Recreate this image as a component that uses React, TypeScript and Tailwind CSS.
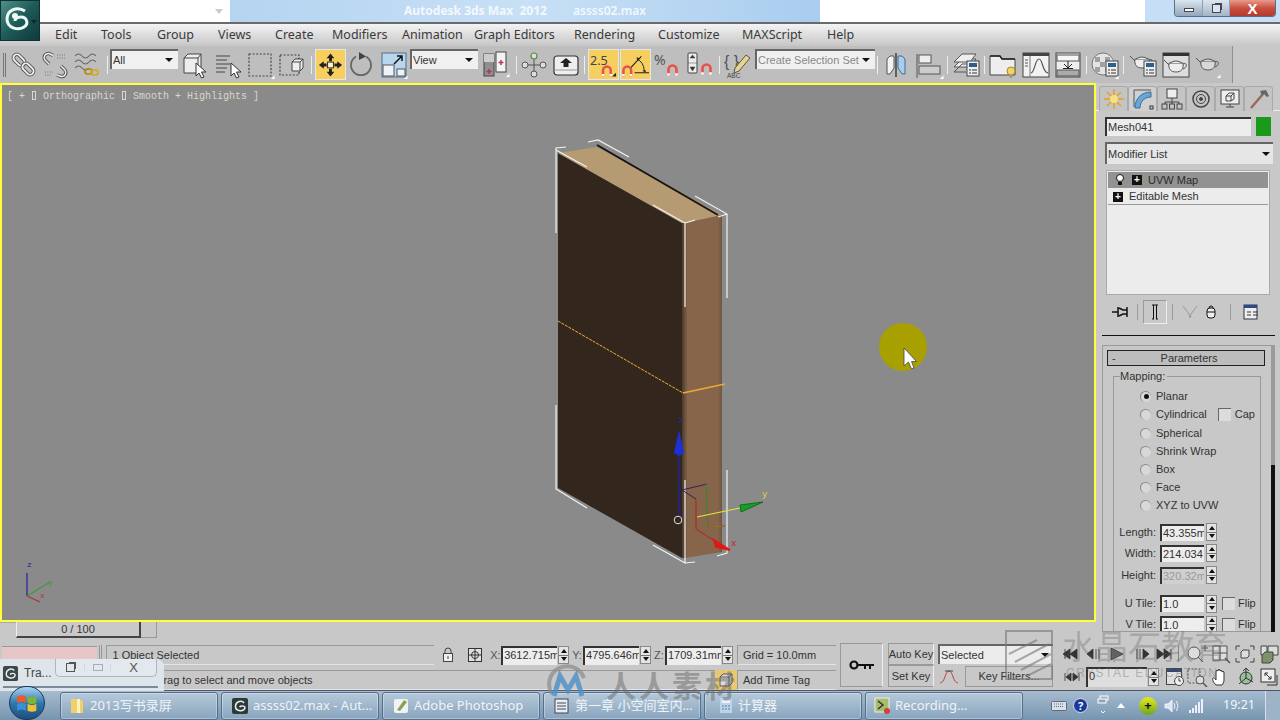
import React from "react";

const UI = "font-['Liberation_Sans',sans-serif]";
const MENU = "font-['Noto_Sans','Liberation_Sans',sans-serif]";
const CJK = "font-['Noto_Sans','Noto_Sans_CJK_SC',sans-serif]";

type IcoProps = { children: React.ReactNode; size?: number };

const Ico = ({ children, size = 30 }: IcoProps) => (
  <svg width={size} height={size} viewBox="0 0 30 30" fill="none">
    {children}
  </svg>
);

const Cursor = ({ x, y, s = 1 }: { x: number; y: number; s?: number }) => (
  <path
    transform={`translate(${x} ${y}) scale(${s})`}
    d="M0 0V13L3 10L5.5 15L8 14L5.5 9H10Z"
    fill="#fff"
    stroke="#333"
    strokeWidth="1"
  />
);

// horseshoe magnet used by the snap toggles
const Magnet = ({ x, y }: { x: number; y: number }) => (
  <g transform={`translate(${x} ${y})`}>
    <path d="M1.500 12V5.500a4 4 0 0 1 8 0V12" stroke="#e8524a" strokeWidth="2.600" />
    <path d="M.2 10.500h2.600M8.200 10.500h2.600" stroke="#fff" strokeWidth="2.400" />
  </g>
);

const Flyout = ({ x = 25, y = 25 }: { x?: number; y?: number }) => (
  <path d={`M${x} ${y}h3.500v-3.500Z`} fill="#fff" />
);

const Ring = ({ x, y, r }: { x: number; y: number; r: number }) => (
  <g transform={`rotate(-45 ${x} ${y})`}>
    <rect x={x - 3.500} y={y - 6.500} width="7" height="13" rx="3.500" stroke="#555" strokeWidth="3.600" />
    <rect x={x - 3.500} y={y - 6.500} width="7" height="13" rx="3.500" stroke="#eee" strokeWidth={r} />
  </g>
);

const Link = () => (
  <Ico>
    <Ring x={10} y={10} r={1.800} />
    <Ring x={19} y={19} r={1.800} />
  </Ico>
);

const Unlink = () => (
  <Ico>
    <path d="M13 5.500 9 3.500C5 3 3 7 5 10l4 4" stroke="#555" strokeWidth="3.400" />
    <path d="M13 5.500 9 3.500C5 3 3 7 5 10l4 4" stroke="#eee" strokeWidth="1.400" />
    <path d="M17 25l4 1.500c4 .5 6-3.500 4-6.500l-4-4" stroke="#555" strokeWidth="3.400" />
    <path d="M17 25l4 1.500c4 .5 6-3.500 4-6.500l-4-4" stroke="#eee" strokeWidth="1.400" />
    <path d="M17 5h8M17 8h8M5 22h8M5 25h6" stroke="#777" strokeWidth="1.200" strokeDasharray="1 1.400" />
  </Ico>
);

const Bind = () => (
  <Ico>
    <path d="M2 6q3.500-4 7 0t7 0 7 0M2 12q3.500-4 7 0t7 0 7 0M2 18q3.500-4 7 0t7 0" stroke="#666" strokeWidth="1.100" />
    <rect x="12" y="19" width="7" height="5" rx="2.500" stroke="#b8860b" strokeWidth="1.600" />
    <rect x="18" y="20" width="7" height="5" rx="2.500" stroke="#d9a520" strokeWidth="1.600" />
  </Ico>
);

const SelectObj = () => (
  <Ico>
    <path d="M4 8 8 4h13v15l-3 4H4Z" fill="#eee" stroke="#444" />
    <path d="M4 8h14v15M18 8l3-4" stroke="#444" />
    <Cursor x={16} y={13} />
  </Ico>
);

const SelectName = () => (
  <Ico>
    <path d="M3 6h14M3 10h11M3 14h14M3 18h11M3 22h9" stroke="#444" />
    <Cursor x={18} y={13} />
  </Ico>
);

const RectSel = () => (
  <Ico>
    <rect x="4" y="4" width="22" height="22" stroke="#444" strokeWidth="1.200" strokeDasharray="2 1.600" />
    <Flyout x={26} y={29} />
  </Ico>
);

const WindowSel = () => (
  <Ico>
    <rect x="3" y="5" width="19" height="20" stroke="#444" strokeWidth="1.200" strokeDasharray="2 1.600" />
    <path d="M15 12l3-3h8v9l-3 3h-8Z" fill="#eee" stroke="#444" />
    <path d="M15 12h8v9M23 12l3-3" stroke="#444" />
  </Ico>
);

const Move = () => (
  <Ico>
    <rect x="12" y="12" width="6" height="6" fill="#fff6d0" stroke="#222" />
    <path d="M15 3l4 5h-2.500v3h-3V8H11ZM15 27l4-5h-2.500v-3h-3v3H11ZM3 15l5-4v2.500h3v3H8V19ZM27 15l-5-4v2.500h-3v3h3V19Z" fill="#222" />
  </Ico>
);

const Rotate = () => (
  <Ico>
    <path d="M19 6.500A10 10 0 1 1 9 6.500" stroke="#666" strokeWidth="1.800" />
    <path d="M12 2l7 4.500-7 3.500Z" fill="#444" />
  </Ico>
);

const Scale = () => (
  <Ico>
    <rect x="3" y="3" width="24" height="24" fill="#b9d6ee" stroke="#4a6f8f" />
    <rect x="4" y="15" width="11" height="11" fill="#eef3f7" stroke="#555" />
    <rect x="18" y="19" width="8" height="7" fill="#eef3f7" stroke="#555" />
    <path d="M15 14 23 6M18 6h5v5" stroke="#111" strokeWidth="1.500" />
    <Flyout x={25} y={29} />
  </Ico>
);

const Pivot = () => (
  <Ico>
    <rect x="3" y="4" width="10" height="22" fill="#8f8f8f" stroke="#444" />
    <rect x="3" y="4" width="10" height="8" fill="#ccc" />
    <rect x="15" y="2" width="10" height="20" fill="#f2f2f2" stroke="#444" />
    <path d="M8 19v5M5.500 21.500h5M20 10v5M17.500 12.500h5" stroke="#c03050" strokeWidth="1.500" />
    <Flyout x={25} y={27} />
  </Ico>
);

const Manip = () => (
  <Ico>
    <path d="M15 5v20M5 15h20" stroke="#555" />
    <circle cx="15" cy="6" r="3" fill="#ddd" stroke="#5a8a3a" strokeWidth="1.200" />
    <circle cx="6" cy="15" r="3" fill="#ddd" stroke="#555" />
    <circle cx="24" cy="15" r="3" fill="#ddd" stroke="#555" />
    <circle cx="15" cy="24" r="3" fill="#ddd" stroke="#555" />
  </Ico>
);

const Keyb = () => (
  <Ico>
    <rect x="3" y="6" width="24" height="19" rx="3" fill="#eee" stroke="#333" strokeWidth="1.200" />
    <path d="M3 20h24" stroke="#999" />
    <path d="M15 8l6 5h-3.500v4h-5v-4H9Z" fill="#222" />
  </Ico>
);

const Snap = () => (
  <Ico>
    <text x="1" y="15" fontSize="13" fill="#444" fontFamily="Noto Sans, sans-serif">2.5</text>
    <Magnet x={13} y={15} />
    <path d="M24 27h4v-4Z" fill="#222" />
  </Ico>
);

const AngleSnap = () => (
  <Ico>
    <path d="M9 19 21 6M14 23h15" stroke="#222" strokeWidth="1.200" />
    <path d="M17 9q6 3 7 11" stroke="#222" />
    <path d="M16 7l3 1-2 2.500ZM22 21l3-1 1 3Z" fill="#222" />
    <Magnet x={1} y={15} />
  </Ico>
);

const PercentSnap = () => (
  <Ico>
    <text x="1" y="15" fontSize="14" fill="#555" fontFamily="Noto Sans, sans-serif">%</text>
    <Magnet x={14} y={14} />
  </Ico>
);

const SpinnerSnap = () => (
  <Ico>
    <rect x="3" y="3" width="9" height="20" rx="1" fill="#eee" stroke="#444" />
    <path d="M3 13h9M7.500 5l2.500 3H5ZM7.500 21 5 17h5Z" fill="#333" stroke="#444" strokeWidth=".5" />
    <Magnet x={16} y={13} />
  </Ico>
);

const Abc = () => (
  <Ico>
    <text x="0" y="17" fontSize="16" fill="#555" fontFamily="Liberation Sans, sans-serif">{"{ }"}</text>
    <path d="M11 18 22 5l4 3-11 13-5 2Z" fill="#e8d48a" stroke="#555" />
    <text x="3" y="28" fontSize="6.500" fill="#444" fontFamily="Liberation Sans, sans-serif">ABC</text>
  </Ico>
);

const Mirror = () => (
  <Ico>
    <path d="M15 3v24" stroke="#222" strokeWidth="1.200" />
    <path d="M13 6H9L6 9v15h3l4-6Z" fill="#f2f2f2" stroke="#555" />
    <path d="M17 6h4l3 3v15h-3l-4-6Z" fill="#a9cdea" stroke="#3a6f99" />
  </Ico>
);

const Align = () => (
  <Ico>
    <path d="M3 4v24" stroke="#555" />
    <rect x="5" y="5" width="12" height="8" fill="#eee" stroke="#555" />
    <rect x="5" y="16" width="21" height="8" fill="#ccc" stroke="#555" />
    <Flyout x={26} y={29} />
  </Ico>
);

const Doc = () => (
  <>
    <rect x="16" y="11" width="12" height="15" fill="#eee" stroke="#444" />
    <rect x="18" y="13" width="8" height="4" fill="#2d5f8a" />
    <path d="M18 20h2M21 20h5M18 23h2M21 23h5" stroke="#333" />
  </>
);

const Layers = () => (
  <Ico>
    <path d="M3 17 11 9h14l-6 8Z" fill="#eee" stroke="#555" />
    <path d="M3 12 11 4h14l-6 8Z" fill="#eee" stroke="#555" />
    <path d="M3 22l8-8h6" stroke="#555" />
    <path d="M3 22h12" stroke="#555" />
    <Doc />
  </Ico>
);

const Curve = () => (
  <Ico>
    <rect x="2" y="3" width="26" height="24" fill="#f2f2f2" stroke="#444" />
    <rect x="2" y="3" width="26" height="3" fill="#444" />
    <path d="M9 6v21" stroke="#777" />
    <path d="M10 23c4-1 4-14 8-14s3 13 9 14" stroke="#555" strokeWidth="1.200" />
    <path d="M4 10h3M4 13h3M4 16h3" stroke="#555" />
  </Ico>
);

const Folder = () => (
  <Ico>
    <path d="M2 6h10l2 3h13v16H2Z" fill="#eee" stroke="#444" />
    <path d="M2 6h10l2 3h13" stroke="#222" strokeWidth="1.500" />
    <circle cx="23" cy="21" r="4" fill="#f3d36a" stroke="#b08a1e" />
    <rect x="21.500" y="25" width="3" height="3" fill="#999" />
  </Ico>
);

const Schematic = () => (
  <Ico>
    <rect x="3" y="3" width="24" height="24" fill="#eee" stroke="#444" />
    <rect x="4" y="5" width="22" height="6" fill="#f6f6f6" stroke="#555" />
    <rect x="4" y="20" width="22" height="6" fill="#aaa" stroke="#555" />
    <path d="M15 11v6M11 14l4 4 4-4M10 18.500h10" stroke="#222" />
  </Ico>
);

const Material = () => (
  <Ico>
    <circle cx="13" cy="14" r="11" fill="#e4e4e4" stroke="#777" />
    <path d="M5 7h5v5H5ZM15 7h5v5h-5ZM10 12h5v5h-5ZM5 17h5v5H5ZM15 17h5v5h-5Z" fill="#a0a0a0" />
    <Doc />
    <Flyout x={25} y={29} />
  </Ico>
);

const TeapotShape = ({ x = 0, y = 0, fill = "#eee" }: { x?: number; y?: number; fill?: string }) => (
  <g transform={`translate(${x} ${y})`} stroke="#555">
    <path d="M7 10c-1 6 2 9 7 9s8-3 7-9Z" fill={fill} />
    <path d="M7 12 2 7M21 11c4-2 5 3 0 5" />
    <path d="M8 10q6-4 12 0" fill={fill} />
  </g>
);

const TeapotDoc = () => (
  <Ico>
    <TeapotShape y={-1} />
    <Doc />
  </Ico>
);

const TeapotFrame = () => (
  <Ico>
    <rect x="2" y="3" width="26" height="24" fill="#ddd" stroke="#444" />
    <rect x="2" y="3" width="26" height="3" fill="#333" />
    <TeapotShape x={1} y={3} />
  </Ico>
);

const TeapotPlain = () => (
  <Ico>
    <TeapotShape x={1} y={1} fill="#d8d8d8" />
    <Flyout x={24} y={28} />
  </Ico>
);

const Cell = ({ w, on, children }: { w: string; on?: boolean; children: React.ReactNode }) => (
  <div className={`${w} h-[37px] flex items-center justify-center shrink-0`}>
    <div className={on ? "w-[31px] h-[31px] bg-[#f7cf5e] border border-[#e6e6e6] flex items-center justify-center" : "flex items-center justify-center"}>
      {children}
    </div>
  </div>
);

const Sep = ({ w }: { w: string }) => (
  <div className={`${w} h-[37px] flex items-center justify-center shrink-0`}>
    <div className="w-px h-[18px] bg-[#777] border-r border-[#eee]" />
  </div>
);

const Drop = ({ w, label, muted }: { w: string; label: string; muted?: boolean }) => (
  <div className={`${w} h-[20px] -mt-[11px] shrink-0 bg-[#f0f0f0] border-l-2 border-t-2 border-[#666] flex items-center justify-between pl-[1px] pr-[5px] text-[11px] ${muted ? "text-[#888]" : "text-[#333]"}`}>
    <span className="truncate">{label}</span>
    <span className="w-0 h-0 shrink-0 border-l-[4px] border-r-[4px] border-t-[4px] border-l-transparent border-r-transparent border-t-[#111]" />
  </div>
);

const menus: [string, string][] = [
  ["Edit", "w-[46px]"],
  ["Tools", "w-[56px]"],
  ["Group", "w-[61px]"],
  ["Views", "w-[57px]"],
  ["Create", "w-[57px]"],
  ["Modifiers", "w-[70px]"],
  ["Animation", "w-[72px]"],
  ["Graph Editors", "w-[100px]"],
  ["Rendering", "w-[84px]"],
  ["Customize", "w-[84px]"],
  ["MAXScript", "w-[85px]"],
  ["Help", "w-[40px]"],
];

const TitleBar = () => (
  <div className="h-[24px] flex border-b-2 border-[#6a6a6a] bg-white shrink-0">
    <div className="w-[230px] flex justify-end items-center pr-[7px]">
      <span className="w-0 h-0 border-l-[4px] border-r-[4px] border-t-[5px] border-l-transparent border-r-transparent border-t-[#c4ccd6]" />
    </div>
    <div className={`w-[590px] bg-gradient-to-r from-[#b4d4f0] via-[#c8e0f6] to-[#a9cdef] flex items-center pl-[174px] text-[12px] font-bold text-[#f4f8fc] ${MENU}`}>
      <span className="w-[169px]">Autodesk 3ds Max&nbsp;&nbsp;2012</span>
      <span className="font-semibold">assss02.max</span>
    </div>
    <div className="w-[325px]" />
    <div className="w-[135px] bg-[#c6dff6] flex justify-end pr-[4px]">
      <div className="h-[17px] flex rounded-b-[4px] border border-t-0 border-[#5f6f80] overflow-hidden">
        <div className="w-[28px] bg-gradient-to-b from-[#dbe6f0] to-[#93a6ba] border-r border-[#8fa0b0] flex items-center justify-center">
          <div className="w-[10px] h-[4px] border border-[#445] bg-white mt-[3px]" />
        </div>
        <div className="w-[27px] bg-gradient-to-b from-[#dbe6f0] to-[#a4b5c6] border-r border-[#8fa0b0] flex items-center justify-center">
          <div className="w-[9px] h-[9px] border border-[#445] bg-[#dde6ee] shadow-[2px_-2px_0_-1px_#445]" />
        </div>
        <div className="w-[45px] bg-gradient-to-b from-[#e89a8c] via-[#c94f3f] to-[#b23a2e] flex items-center justify-center text-[15px] leading-none font-bold text-white">
          <span className={UI}>X</span>
        </div>
      </div>
    </div>
  </div>
);

const MenuBar = () => (
  <div className={`h-[22px] flex items-center pl-[55px] text-[12.5px] text-[#3a3a3a] bg-gradient-to-b from-[#f4f4f4] to-[#c6c6c6] shrink-0 ${MENU}`}>
    {menus.map(([label, w]) => (
      <span key={label} className={`${w} shrink-0`}>{label}</span>
    ))}
  </div>
);

const Toolbar = () => (
  <div className={`h-[37px] flex bg-[#c8c8c8] shrink-0 ${UI}`}>
    <div className="w-[1233px] h-[37px] flex items-center bg-[#bebebe] border-r border-[#8f8f8f]">
      <div className="w-[8px] flex justify-center shrink-0">
        <div className="w-[3px] h-[24px] border-x border-[#777]" />
      </div>
      <Cell w="w-[31px]"><Link /></Cell>
      <Cell w="w-[32px]"><Unlink /></Cell>
      <Cell w="w-[34px]"><Bind /></Cell>
      <Sep w="w-[5px]" />
      <Drop w="w-[68px]" label="All" />
      <Cell w="w-[34px]"><SelectObj /></Cell>
      <Cell w="w-[32px]"><SelectName /></Cell>
      <Cell w="w-[32px]"><RectSel /></Cell>
      <Cell w="w-[32px]"><WindowSel /></Cell>
      <Sep w="w-[6px]" />
      <Cell w="w-[32px]" on><Move /></Cell>
      <Cell w="w-[32px]"><Rotate /></Cell>
      <Cell w="w-[32px]"><Scale /></Cell>
      <Drop w="w-[68px]" label="View" />
      <Cell w="w-[36px]"><Pivot /></Cell>
      <Sep w="w-[4px]" />
      <Cell w="w-[32px]"><Manip /></Cell>
      <Cell w="w-[32px]"><Keyb /></Cell>
      <Sep w="w-[5px]" />
      <Cell w="w-[32px]" on><Snap /></Cell>
      <Cell w="w-[33px]" on><AngleSnap /></Cell>
      <Cell w="w-[32px]"><PercentSnap /></Cell>
      <Cell w="w-[32px]"><SpinnerSnap /></Cell>
      <Sep w="w-[6px]" />
      <Cell w="w-[33px]"><Abc /></Cell>
      <Drop w="w-[120px]" label="Create Selection Set" muted />
      <Sep w="w-[5px]" />
      <Cell w="w-[32px]"><Mirror /></Cell>
      <Cell w="w-[33px]"><Align /></Cell>
      <Sep w="w-[5px]" />
      <Cell w="w-[32px]"><Layers /></Cell>
      <Sep w="w-[4px]" />
      <Cell w="w-[34px]"><Folder /></Cell>
      <Cell w="w-[32px]"><Curve /></Cell>
      <Cell w="w-[32px]"><Schematic /></Cell>
      <Sep w="w-[5px]" />
      <Cell w="w-[32px]"><Material /></Cell>
      <Sep w="w-[5px]" />
      <Cell w="w-[34px]"><TeapotDoc /></Cell>
      <Cell w="w-[32px]"><TeapotFrame /></Cell>
      <Cell w="w-[32px]"><TeapotPlain /></Cell>
    </div>
  </div>
);

const brackets = [
  "M556 233V148L566 147M556 150 587 167",
  "M588 142 598 140 629 157",
  "M695 196 727 214V298M718 217 727 214",
  "M653 205 685 223V307M685 223 695 220",
  "M556 405V489L587 508",
  "M653 545 685 563V480M685 563 695 562",
  "M727 470V553L717 556",
];

const Model = () => (
  <svg className="absolute inset-0" width="1092" height="535" viewBox="2 85 1092 535" fill="none">
    <defs>
      <linearGradient id="side" x1="0" x2="1" y1="0" y2="0">
        <stop offset="0" stopColor="#4a3a2e" />
        <stop offset=".14" stopColor="#87654a" />
        <stop offset=".9" stopColor="#87654a" />
        <stop offset="1" stopColor="#6d5644" />
      </linearGradient>
    </defs>
    <path d="M558 153 682 223V558L558 488Z" fill="#33261d" />
    <path d="M558 153 597 147 722 215 685 223 682 223Z" fill="#b69a72" />
    <path d="M682 223 685 223 722 215V552L685 558 682 558Z" fill="url(#side)" />
    <path d="M597 145 718 215" stroke="#1a1410" strokeWidth="2" />
    <path d="M558 321 683 393" stroke="#f0b040" strokeWidth="1" strokeDasharray="3 1" />
    <path d="M683 393 725 384" stroke="#f0a838" strokeWidth="1.500" />
    <path d={brackets.join("")} stroke="#f2f2f2" strokeWidth="1.200" />
    <path d="M679 517V450" stroke="#22229a" strokeWidth="1.500" />
    <path d="M679 430 684 453 679 456 674 453Z" fill="#1c30d8" />
    <text x="678" y="423" fontSize="9" fill="#2a2aa0" fontFamily="Liberation Mono, monospace">z</text>
    <path d="M682 490 707 484M682 490 696 499" stroke="#352060" />
    <path d="M706 484 708 527" stroke="#2f8a2f" />
    <path d="M696 499V529L718 543M708 527 725 526" stroke="#b02020" />
    <path d="M708 527 725 526" stroke="#888030" />
    <path d="M697 517 740 508" stroke="#e8e040" strokeWidth="1.200" />
    <path d="M740 505 763 502 741 512Z" fill="#14a028" stroke="#0c7018" />
    <text x="762" y="497" fontSize="9" fill="#e0d840" fontFamily="Liberation Mono, monospace">y</text>
    <path d="M714 540 730 550 716 547Z" fill="#e01818" stroke="#e01818" strokeWidth="2" />
    <text x="731" y="546" fontSize="9" fill="#c02020" fontFamily="Liberation Mono, monospace">x</text>
    <circle cx="678" cy="520" r="3.800" stroke="#e0e0e0" />
    <path d="M27 596V573" stroke="#2020a0" strokeWidth="1.200" />
    <path d="M27 596 50 582" stroke="#3c9a3c" strokeWidth="1.200" />
    <path d="M27 596 40 602" stroke="#b03030" strokeWidth="1.200" />
    <text x="27" y="567" fontSize="8" fill="#2020a0" fontFamily="Liberation Mono, monospace">z</text>
    <text x="48" y="585" fontSize="8" fill="#3c9a3c" fontFamily="Liberation Mono, monospace">y</text>
    <text x="40" y="598" fontSize="8" fill="#b03030" fontFamily="Liberation Mono, monospace">x</text>
    <circle cx="903" cy="347" r="24" fill="#a8a000" />
    <path d="M904 348V366L908.500 362 911.500 369 914 368 911.500 361.500H916.500Z" fill="#fff" stroke="#444" strokeWidth=".8" />
  </svg>
);

const BoxGlyph = () => (
  <span className="inline-block w-[6px] h-[9px] align-[-1px] px-[1px]">
    <span className="block w-[4px] h-[9px] border border-[#d8d8cc]" />
  </span>
);

const Viewport = () => (
  <div className="relative h-[539px] border-2 border-[#ffff3c] bg-[#8a8a8a] overflow-hidden">
    <Model />
    <div className="relative pl-[5px] pt-[6px] font-['Liberation_Mono',monospace] text-[10px] leading-[12px] whitespace-pre text-[#d8d8cc]">
      {"[ + "}
      <BoxGlyph />
      {" Orthographic "}
      <BoxGlyph />
      {" Smooth + Highlights ]"}
    </div>
  </div>
);

const TimeSlider = () => (
  <div className={`h-[18px] flex text-[11px] text-[#333] ${UI}`}>
    <div className="w-[16px] h-[16px] border-t border-[#aaa]" />
    <div className="w-[125px] h-[16px] pt-px bg-[#c9c9c9] border-l border-[#eee] border-r-2 border-b-2 border-r-[#444] border-b-[#444] flex items-center justify-center">
      0 / 100
    </div>
    <div className="w-[16px] h-[16px] border-r border-b border-[#999]" />
  </div>
);

const tabCls = "w-[29px] h-[25px] rounded-t-[3px] border border-b-0 border-[#aaa] flex items-center justify-center bg-[#c4c4c4]";

const PanelTabs = () => (
  <div className="mt-[3px] h-[25px] flex pl-[3px] border-b border-[#eee]">
    <div className={tabCls}>
      <svg width="22" height="22" viewBox="0 0 22 22">
        <path d="M11 1v20M1 11h20M4 4l14 14M18 4 4 18" stroke="#e8a020" strokeWidth="1.500" />
        <circle cx="11" cy="11" r="4" fill="#f6e080" />
      </svg>
    </div>
    <div className={`${tabCls} bg-[#d0d0d0]`}>
      <svg width="22" height="22" viewBox="0 0 22 22" fill="none">
        <path d="M2 19V2h17" stroke="#555" />
        <path d="M3 20C3 10 10 4 19 4v5C13 9 8 13 8 20Z" fill="#6aa6d4" stroke="#3a6f99" />
        <rect x="18" y="18" width="3" height="3" stroke="#333" />
      </svg>
    </div>
    <div className={tabCls}>
      <svg width="22" height="22" viewBox="0 0 22 22" fill="none" stroke="#444">
        <rect x="6" y="1" width="10" height="9" fill="#eee" />
        <path d="M11 10v4M4 14h14v2M4 14v2M11 14v2" />
        <rect x="1" y="16" width="5" height="5" />
        <rect x="8.500" y="16" width="5" height="5" />
        <rect x="16" y="16" width="5" height="5" />
      </svg>
    </div>
    <div className={tabCls}>
      <svg width="22" height="22" viewBox="0 0 22 22" fill="none" stroke="#444">
        <circle cx="11" cy="11" r="8" strokeWidth="1.500" />
        <circle cx="11" cy="11" r="4.500" />
        <circle cx="11" cy="11" r="1.500" fill="#444" />
      </svg>
    </div>
    <div className={tabCls}>
      <svg width="22" height="22" viewBox="0 0 22 22" fill="none" stroke="#444">
        <rect x="2" y="2" width="18" height="14" fill="#eee" />
        <path d="M7 8l3-3h5v6l-3 2H7ZM7 8h5v5M12 8l3-3M7 19h8M11 16v3" />
      </svg>
    </div>
    <div className={tabCls}>
      <svg width="22" height="22" viewBox="0 0 22 22" fill="none">
        <path d="M3 20 15 6" stroke="#9c6a5a" strokeWidth="2.500" />
        <path d="M12 3l6-1 3 6-2 1-3-3-2 2Z" fill="#666" />
      </svg>
    </div>
  </div>
);

const Plus = () => (
  <span className="block w-[10px] h-[10px] bg-[#111] text-white text-[10px] leading-[9px] text-center shrink-0 font-bold">+</span>
);

const ModStack = () => (
  <div className="ml-[10px] mt-[6px] w-[164px] h-[125px] bg-[#ececec] border border-[#aaa] p-px text-[11px] text-[#333]">
    <div className="h-[16px] bg-[#929292] flex items-center pl-[7px]">
      <svg width="10" height="12" viewBox="0 0 10 12">
        <circle cx="5" cy="4" r="3.500" fill="#fff" stroke="#111" />
        <rect x="3" y="8" width="4" height="3" fill="#111" />
      </svg>
      <span className="ml-[7px] flex"><Plus /></span>
      <span className="ml-[6px] text-[#2a2a2a]">UVW Map</span>
    </div>
    <div className="h-[17px] flex items-center pl-[5px] pt-px border-b border-[#999]">
      <Plus />
      <span className="ml-[6px]">Editable Mesh</span>
    </div>
  </div>
);

const PanelIcons = () => (
  <div className="mt-[4px] h-[26px] flex items-center pl-[15px]">
    <svg width="18" height="14" viewBox="0 0 18 14" fill="none">
      <path d="M1 7h6" stroke="#111" strokeWidth="1.500" />
      <path d="M7 2v10M8 3l4 2h4V2v10V9h-4l-4 2" stroke="#111" strokeWidth="1.500" />
    </svg>
    <div className="ml-[8px] w-px h-[16px] bg-[#999]" />
    <div className="ml-[5px] w-[24px] h-[24px] border border-[#999] border-r-[#eee] border-b-[#eee] flex items-center justify-center">
      <svg width="10" height="16" viewBox="0 0 10 16" fill="none">
        <path d="M2 1h6M3.500 1v14M6.500 1v14M2 15h2M6 15h2" stroke="#111" />
      </svg>
    </div>
    <div className="ml-[5px] w-px h-[16px] bg-[#999]" />
    <svg className="ml-[9px]" width="16" height="16" viewBox="0 0 16 16" fill="none">
      <path d="M1 2l6 8 1 4 1-4 6-8" stroke="#9a9a9a" />
    </svg>
    <svg className="ml-[7px]" width="12" height="16" viewBox="0 0 12 16" fill="none" stroke="#111">
      <rect x="2" y="4" width="8" height="10" rx="3" fill="#eee" />
      <path d="M4 4a2 2 0 0 1 4 0M2 8h8" />
    </svg>
    <div className="ml-[13px] w-px h-[16px] bg-[#999]" />
    <svg className="ml-[12px]" width="16" height="16" viewBox="0 0 16 16" fill="none">
      <rect x="1" y="1" width="13" height="14" fill="#eee" stroke="#334" />
      <rect x="1" y="1" width="13" height="3" fill="#2a4a8a" />
      <path d="M4 8h4M4 11h4M10 8h5M10 11h5" stroke="#333" />
    </svg>
  </div>
);

const radios = ["Planar", "Cylindrical", "Spherical", "Shrink Wrap", "Box", "Face", "XYZ to UVW"];
const radioRows = ["h-[18px]", "h-[19px]", "h-[18px]", "h-[18px]", "h-[18px]", "h-[18px]", "h-[18px]"];

const Radio = ({ on }: { on?: boolean }) => (
  <span className="w-[11px] h-[11px] rounded-full bg-[#d8d8d8] border-l border-t border-[#888] flex items-center justify-center shrink-0">
    {on && <span className="w-[5px] h-[5px] rounded-full bg-[#111]" />}
  </span>
);

const Check = () => (
  <span className="block w-[13px] h-[13px] shrink-0 bg-[#dcdcdc] border-l border-t border-[#666]" />
);

const Spin = () => (
  <div className="w-[11px] h-[18px] flex flex-col shrink-0 border border-[#888] bg-[#e4e4e4]">
    <div className="flex-1 flex items-center justify-center border-b border-[#777]">
      <span className="w-0 h-0 border-l-[3px] border-r-[3px] border-b-[4px] border-l-transparent border-r-transparent border-b-[#111]" />
    </div>
    <div className="flex-1 flex items-center justify-center">
      <span className="w-0 h-0 border-l-[3px] border-r-[3px] border-t-[4px] border-l-transparent border-r-transparent border-t-[#111]" />
    </div>
  </div>
);

const ParamRow = ({ label, value, dim, flip, h }: { label: string; value: string; dim?: boolean; flip?: boolean; h: string }) => (
  <div className={`${h} flex items-center`}>
    <span className="w-[45px] text-right pr-[3px] shrink-0 whitespace-nowrap">{label}</span>
    <div className={`ml-[1px] w-[44px] h-[17px] overflow-hidden whitespace-nowrap border-l-2 border-t-2 border-[#333] pl-[1px] leading-[15px] shrink-0 ${dim ? "text-[#999] bg-[#d0d0d0]" : "bg-[#ededed]"}`}>
      {value}
    </div>
    <span className="ml-[2px]"><Spin /></span>
    {flip && <span className="ml-[5px]"><Check /></span>}
    {flip && <span className="ml-[3px]">Flip</span>}
  </div>
);

const Rollout = () => (
  <div className="relative ml-[6px] mt-[9px] h-[287px] w-[170px] border border-[#9a9a9a] pl-[4px] pt-[4px] text-[11px] text-[#333] overflow-hidden">
    <div className="w-[158px] h-[16px] bg-[#bdbdbd] border border-[#222] flex items-center">
      <span className="pl-[4px] w-[10px]">-</span>
      <span className="flex-1 text-center pr-[4px]">Parameters</span>
    </div>
    <div className="relative mt-[10px] ml-[6px] w-[148px] h-[262px] border border-[#999] pt-[10px]">
      <span className="absolute left-[6px] -top-[7px] bg-[#c8c8c8] pr-[2px] leading-[13px]">Mapping:</span>
      {radios.map((r, i) => (
        <div key={r} className={`${radioRows[i]} flex items-center pl-[26px]`}>
          <Radio on={i === 0} />
          <span className="ml-[5px]">{r}</span>
          {i === 1 && <span className="ml-[11px]"><Check /></span>}
          {i === 1 && <span className="ml-[4px]">Cap</span>}
        </div>
      ))}
      <div className="mt-[8px]">
        <ParamRow h="h-[20px]" label="Length:" value="43.355m" />
        <ParamRow h="h-[22px]" label="Width:" value="214.034" />
        <ParamRow h="h-[22px]" label="Height:" value="320.32m" dim />
        <div className="h-[7px]" />
        <ParamRow h="h-[21px]" label="U Tile:" value="1.0" flip />
        <ParamRow h="h-[21px]" label="V Tile:" value="1.0" flip />
      </div>
    </div>
  </div>
);

const CommandPanel = () => (
  <div className={`relative w-[184px] h-[557px] overflow-hidden bg-[#c8c8c8] ${UI}`}>
    <PanelTabs />
    <div className="mt-[6px] ml-[9px] flex items-center">
      <div className="w-[146px] h-[19px] bg-[#ededed] border-l-2 border-t-2 border-[#333] pl-px text-[11px] leading-[16px] text-[#333]">Mesh041</div>
      <div className="ml-[5px] w-[15px] h-[19px] bg-[#1a9a1a]" />
    </div>
    <div className="mt-[6px] ml-[9px] w-[168px] h-[22px] bg-[#e6e6e6] border-l-2 border-t-2 border-[#666] flex items-center justify-between pl-px pr-[3px] text-[11px] text-[#333]">
      <span>Modifier List</span>
      <span className="w-0 h-0 border-l-[4px] border-r-[4px] border-t-[4px] border-l-transparent border-r-transparent border-t-[#111]" />
    </div>
    <ModStack />
    <PanelIcons />
    <div className="mt-[10px] ml-[6px] w-[173px] h-[1px] bg-[#111]" />
    <Rollout />
    <div className="absolute right-[5px] top-[262px] w-[4px] h-[287px] flex flex-col">
      <div className="h-[120px] bg-[#9a9a9a]" />
      <div className="flex-1 bg-[#111]" />
    </div>
  </div>
);

const Field = ({ w, children }: { w: string; children?: React.ReactNode }) => (
  <div className={`${w} h-[20px] shrink-0 border-l border-t border-[#999] border-b border-b-[#e4e4e4] pl-[5px] flex items-center bg-[#c8c8c8] whitespace-nowrap overflow-hidden`}>
    {children}
  </div>
);

const CoordInput = ({ value, w = "w-[56px]" }: { value: string; w?: string }) => (
  <div className={`${w} h-[19px] bg-[#ededed] border-l-2 border-t-2 border-[#333] pl-px leading-[15px] overflow-hidden whitespace-nowrap shrink-0`}>
    {value}
  </div>
);

const StatusLeft = () => (
  <div className="w-[836px] shrink-0 pt-[5px] text-[11px] text-[#333]">
    <div className="flex items-center h-[20px]">
      <div className="ml-[2px] w-[96px] h-[19px] bg-[#e6c6c6] border-t border-[#999]" />
      <div className="ml-[2px] w-[3px] h-[20px] border-x border-[#999]" />
      <div className="ml-[4px]"><Field w="w-[328px]">1 Object Selected</Field></div>
      <div className="w-[27px] flex justify-center">
        <svg width="12" height="16" viewBox="0 0 12 16" fill="none" stroke="#444">
          <rect x="1.500" y="6.500" width="9" height="8" fill="#eee" />
          <path d="M3 6V4a3 3 0 0 1 6 0v2M6 9v3" />
        </svg>
      </div>
      <div className="w-[28px] flex justify-center">
        <svg width="16" height="16" viewBox="0 0 16 16" fill="none" stroke="#333">
          <rect x="1.500" y="1.500" width="13" height="13" fill="#e0e0e0" />
          <circle cx="8" cy="8" r="3.500" />
          <path d="M8 1v14M1 8h14" />
        </svg>
      </div>
      <span className="ml-[1px] w-[11px] text-[#555]">X:</span>
      <CoordInput value="3612.715m" />
      <span className="ml-px"><Spin /></span>
      <span className="ml-[3px] w-[11px] text-[#555]">Y:</span>
      <CoordInput value="4795.646m" />
      <span className="ml-px"><Spin /></span>
      <span className="ml-[3px] w-[11px] text-[#555]">Z:</span>
      <CoordInput value="1709.31mm" />
      <span className="ml-px"><Spin /></span>
      <div className="ml-[4px]"><Field w="w-[99px]">Grid = 10.0mm</Field></div>
    </div>
    <div className="flex items-center h-[20px] mt-[5px] ml-[107px]">
      <Field w="w-[608px]"><span className="-ml-[4px]">Click and drag to select and move objects</span></Field>
      <div className="w-[22px] h-[20px] bg-[#e8c870] flex items-center justify-center shrink-0">
        <svg width="16" height="16" viewBox="0 0 16 16" fill="none" stroke="#555">
          <path d="M2 5l3-3h9v9l-3 3H2Z" fill="#ddd" />
          <path d="M2 5h9v9M11 5l3-3" />
        </svg>
      </div>
      <Field w="w-[99px]">Add Time Tag</Field>
    </div>
  </div>
);

const KeyBtn = ({ children, w = "w-[46px]" }: { children: React.ReactNode; w?: string }) => (
  <div className={`${w} h-[22px] border border-[#999] border-r-[#eee] bg-[#c8c8c8] flex items-center justify-center shrink-0 whitespace-nowrap`}>
    {children}
  </div>
);

type PlayProps = { d: string; fill?: string };

const Play = ({ d, fill = "#333" }: PlayProps) => (
  <svg width="22" height="16" viewBox="0 0 22 16">
    <path d={d} fill={fill} stroke="#333" strokeWidth=".8" />
  </svg>
);

const KeyControls = () => (
  <div className="flex pt-[3px] text-[11px] text-[#333]">
    <div className="ml-[4px] w-[43px] h-[44px] border border-[#999] border-r-[#eee] flex items-center justify-center shrink-0">
      <svg width="26" height="12" viewBox="0 0 26 12" fill="none">
        <circle cx="5" cy="6" r="3.500" stroke="#111" strokeWidth="2.200" />
        <path d="M9 5h16v2h-3v3h-2V7h-3v3h-2V7H9Z" fill="#111" />
      </svg>
    </div>
    <div className="ml-[5px] flex flex-col">
      <KeyBtn>Auto Key</KeyBtn>
      <KeyBtn>Set Key</KeyBtn>
    </div>
    <div className="ml-[4px] w-[115px] flex flex-col">
      <div className="h-[20px] mt-px bg-[#ececec] border-l-2 border-t-2 border-[#666] flex items-center justify-between pl-px pr-[4px]">
        <span>Selected</span>
        <span className="w-0 h-0 border-l-[4px] border-r-[4px] border-t-[4px] border-l-transparent border-r-transparent border-t-[#111]" />
      </div>
      <div className="mt-[2px] flex items-center h-[21px]">
        <svg width="24" height="18" viewBox="0 0 24 18" fill="none">
          <path d="M2 15C7 15 7 3 11 3s4 12 9 12" stroke="#c04040" />
          <path d="M7 3h8" stroke="#444" />
        </svg>
        <div className="ml-[3px] w-[88px] h-[21px] border border-[#999] flex items-center justify-center">Key Filters...</div>
      </div>
    </div>
  </div>
);

const PlayControls = () => (
  <div className="w-[222px] ml-[7px] pt-[3px] text-[11px] text-[#333]">
    <div className="h-[22px] flex items-center">
      <span className="w-[24px] flex justify-center"><Play d="M5 3v10M17 3v10l-7-5ZM10 3v10L3 8Z" /></span>
      <span className="ml-[2px] w-[26px] flex justify-center"><Play d="M9 3v10L3 8ZM12 3v10M15 3v10" /></span>
      <span className="w-[22px] flex justify-center"><Play d="M5 2v12l12-6Z" fill="#666" /></span>
      <span className="ml-[1px] w-[26px] flex justify-center"><Play d="M13 3v10l6-5ZM7 3v10M10 3v10" /></span>
      <span className="w-[26px] flex justify-center"><Play d="M5 3v10l7-5ZM12 3v10l7-5ZM19 3v10" /></span>
      <div className="ml-[4px] w-px h-[16px] bg-[#888]" />
      <NavIcons row={0} />
    </div>
    <div className="h-[22px] mt-px flex items-center">
      <span className="w-[24px] flex justify-center"><Play d="M4 4v8M18 4v8M5 8l5-4v8ZM17 8l-5-4v8Z" /></span>
      <div className="ml-[2px] w-[61px] h-[20px] bg-[#dedede] border-l-2 border-t-2 border-[#333] pl-px leading-[15px]">0</div>
      <span className="ml-[1px]"><Spin /></span>
      <svg className="ml-[6px]" width="20" height="20" viewBox="0 0 20 20" fill="none" stroke="#444">
        <rect x="1.500" y="1.500" width="15" height="16" fill="#e0e0e0" />
        <rect x="1.500" y="1.500" width="15" height="3" fill="#2a4a8a" />
        <circle cx="14" cy="14" r="4.500" fill="#eee" />
        <path d="M14 11v3h2" />
      </svg>
      <NavIcons row={1} />
    </div>
  </div>
);

const NavIcons = ({ row }: { row: number }) =>
  row === 0 ? (
    <div className="flex ml-[7px]">
      <svg width="24" height="20" viewBox="0 0 24 20" fill="none" stroke="#555">
        <circle cx="8" cy="9" r="6" fill="#ddd" />
        <path d="M12 13l5 5M16 4h6M19 1v6" />
      </svg>
      <svg width="24" height="20" viewBox="0 0 24 20" fill="none" stroke="#555">
        <path d="M3 2h14v14H3ZM10 2v14M3 9h14" fill="#ddd" />
        <path d="M15 14l5 5" strokeWidth="1.500" />
      </svg>
      <svg width="22" height="20" viewBox="0 0 22 20" fill="none" stroke="#444">
        <path d="M2 6V2h4M16 2h4v4M2 14v4h4M16 18h4v-4" />
        <path d="M7 8l2-2h6v6l-2 2H7Z" fill="#ddd" />
      </svg>
      <svg className="ml-[2px]" width="24" height="20" viewBox="0 0 24 20" fill="none" stroke="#444">
        <path d="M10 2h10v9H10ZM3 2h6v9H3Z" fill="#ddd" />
        <path d="M4 11l3-3h8v8l-3 3H4Z" fill="#7d9268" />
      </svg>
    </div>
  ) : (
    <div className="flex ml-[1px]">
      <svg width="24" height="20" viewBox="0 0 24 20" fill="none" stroke="#555">
        <rect x="2" y="2" width="12" height="14" strokeDasharray="2 1.500" />
        <circle cx="14" cy="13" r="4" fill="#ddd" />
        <path d="M17 16l4 4" strokeWidth="1.500" />
      </svg>
      <svg width="24" height="20" viewBox="0 0 24 20" fill="#fff" stroke="#333">
        <path d="M6 18c-3-3-4-6-3-7s2 1 3 2V4a1.200 1.200 0 0 1 2 0V3a1.200 1.200 0 0 1 2 0v1a1.200 1.200 0 0 1 2 0v1a1.200 1.200 0 0 1 2 0v8c0 2-1 4-2 5Z" />
      </svg>
      <svg width="24" height="20" viewBox="0 0 24 20" fill="none" stroke="#333">
        <circle cx="12" cy="11" r="6" fill="#9ac09a" />
        <path d="M12 11V2M9 4l3-3 3 3M12 11 5 17M12 11l7 4" />
      </svg>
      <svg width="24" height="20" viewBox="0 0 24 20" fill="none" stroke="#333">
        <rect x="3" y="2" width="14" height="13" fill="#eee" />
        <path d="M7 6l6 6M7 6h3M7 6v3M13 12h-3M13 12V9M19 8v10H9" />
      </svg>
    </div>
  );

const StatusBar = () => (
  <div className={`h-[50px] flex shrink-0 bg-[#c8c8c8] ${UI}`}>
    <StatusLeft />
    <KeyControls />
    <PlayControls />
  </div>
);

const FileGlyph = ({ kind }: { kind: string }) => {
  if (kind === "folder") {
    return (
      <svg width="16" height="18" viewBox="0 0 16 18">
        <path d="M2 2h7l5 2v12H2Z" fill="#f2cf6a" />
        <path d="M8 2h3v14H8Z" fill="#fff2b8" />
      </svg>
    );
  }
  if (kind === "max") {
    return (
      <svg width="16" height="16" viewBox="0 0 16 16" fill="none">
        <rect x="0" y="0" width="16" height="16" rx="2" fill="#2b3a3a" />
        <path d="M12 5C10 2 4 3 3.500 8s7 6 9 3-3-4-5-2" stroke="#eee" strokeWidth="1.500" />
      </svg>
    );
  }
  if (kind === "ps") {
    return (
      <svg width="16" height="16" viewBox="0 0 16 16">
        <rect width="14" height="14" x="1" y="1" rx="2" fill="#f2f2f2" />
        <path d="M4 12 11 2l3 2-7 9Z" fill="#8aa05a" />
      </svg>
    );
  }
  if (kind === "doc") {
    return (
      <svg width="16" height="16" viewBox="0 0 16 16">
        <rect width="13" height="14" x="1" y="1" fill="#e8edf2" stroke="#445" />
        <path d="M3 5h9M3 8h9M3 11h9" stroke="#445" />
      </svg>
    );
  }
  if (kind === "calc") {
    return (
      <svg width="14" height="16" viewBox="0 0 14 16">
        <rect width="12" height="15" x="1" fill="#bcd4ea" />
        <rect width="8" height="3" x="3" y="2" fill="#eaf3fb" />
        <path d="M3 8h2M6 8h2M9 8h2M3 11h2M6 11h2M9 11h2" stroke="#5580a8" />
      </svg>
    );
  }
  return (
    <svg width="16" height="18" viewBox="0 0 16 18">
      <rect width="14" height="14" x="1" y="1" fill="#a8bc6a" stroke="#eee" />
      <path d="M4 4l5 4-5 4" stroke="#333" fill="none" strokeWidth="1.500" />
      <circle cx="13" cy="14" r="3" fill="#d04040" />
    </svg>
  );
};

const tasks: [string, string, string][] = [
  ["folder", "2013写书录屏", "pl-[8px]"],
  ["max", "assss02.max - Aut...", "pl-[10px]"],
  ["ps", "Adobe Photoshop", "pl-[10px]"],
  ["doc", "第一章 小空间室内...", "pl-[10px]"],
  ["calc", "计算器", "pl-[14px]"],
  ["rec", "Recording...", "pl-[8px]"],
];

const TrayIcons = () => (
  <div className="flex items-center ml-[25px]">
    <svg width="16" height="12" viewBox="0 0 16 12" fill="#d8e2ea" stroke="#667">
      <rect x=".5" y="1.500" width="15" height="9" rx="1" />
      <path d="M3 4h10M3 6.500h10" strokeDasharray="1 1" />
    </svg>
    <span className="ml-[6px] w-[15px] h-[15px] rounded-full bg-[#1a3a9a] border border-[#dde] text-white text-[11px] leading-[13px] text-center font-bold">?</span>
    <svg className="ml-[8px]" width="14" height="22" viewBox="0 0 14 22" fill="none" stroke="#fff">
      <rect x="4" y="1" width="8" height="4" />
      <rect x="2" y="4" width="8" height="4" fill="#8ea8c0" />
      <path d="M5 16l2 2 2-2" />
    </svg>
    <span className="ml-[7px] w-0 h-0 border-l-[4px] border-r-[4px] border-b-[5px] border-l-transparent border-r-transparent border-b-white" />
    <span className="ml-[14px] w-[18px] h-[18px] rounded-full bg-gradient-to-b from-[#e8e820] to-[#6aa81a] text-[#111] text-[13px] leading-[16px] text-center font-bold">+</span>
    <svg className="ml-[6px]" width="18" height="16" viewBox="0 0 18 16" fill="none" stroke="#eef">
      <path d="M2 6h3l4-4v12l-4-4H2Z" fill="#dde6ee" />
      <path d="M11 5q2 3 0 6M13.500 3q3 5 0 10" />
    </svg>
    <svg className="ml-[7px]" width="16" height="14" viewBox="0 0 16 14" fill="#eef">
      <path d="M1 11h2v3H1ZM4 9h2v5H4ZM7 6h2v8H7ZM10 3h2v11h-2ZM13 0h2v14h-2Z" />
    </svg>
    <span className="ml-[19px] text-[12.5px] text-[#f2f6fa]">19:21</span>
  </div>
);

const Taskbar = () => (
  <div className={`relative h-[30px] flex items-center bg-gradient-to-b from-[#a6bccf] to-[#7795b0] border-t border-[#556] pl-[60px] shrink-0 ${CJK}`}>
    {tasks.map(([kind, label, pad]) => (
      <div
        key={label}
        className={`w-[158px] h-[28px] mr-[3px] shrink-0 rounded-[3px] border border-[#54708c] bg-gradient-to-b from-[#b6c9da] to-[#88a4bd] flex items-center ${pad} text-[13px] text-[#eef3f8] whitespace-nowrap overflow-hidden shadow-[inset_0_0_0_1px_rgba(255,255,255,0.3)]`}
      >
        <FileGlyph kind={kind} />
        <span className="ml-[5px]">{label}</span>
      </div>
    ))}
    <TrayIcons />
    <div className="absolute right-0 top-0 h-[30px] w-[15px] border-l border-[#dde] bg-[#9db3c7]" />
  </div>
);

const MiniWindow = () => (
  <div className={`absolute left-0 top-[659px] w-[164px] h-[32px] bg-[#dde4ea] rounded-tr-[8px] ${UI}`}>
    <div className="flex items-center pl-[3px] pt-[5px] text-[12px] text-[#444]">
      <svg width="15" height="15" viewBox="0 0 16 16" fill="none">
        <rect width="16" height="16" rx="2" fill="#3a4a4a" />
        <path d="M12 5C10 2 4 3 3.500 8s7 6 9 3-3-4-5-2" stroke="#eee" strokeWidth="1.500" />
      </svg>
      <span className="ml-[6px]">Tra...</span>
    </div>
    <div className="absolute left-[55px] top-0 w-[102px] h-[18px] rounded-b-[5px] border border-t-0 border-[#aab6c0] flex items-center bg-[#e2e8ee]">
      <span className="w-[28px] flex justify-center">
        <span className="w-[9px] h-[9px] border border-[#555] shadow-[2px_-2px_0_-1px_#555]" />
      </span>
      <span className="w-[27px] flex justify-center border-x border-[#cfd6dc]">
        <span className="w-[10px] h-[7px] border border-[#aab]" />
      </span>
      <span className="flex-1 text-center text-[13px] leading-none text-[#555]">X</span>
    </div>
    <div className="absolute left-[3px] bottom-[3px] w-[155px] h-[2px] bg-[#7a8a98]" />
  </div>
);

const StartOrb = () => (
  <div className="absolute left-[9px] top-[686px] w-[36px] h-[34px] rounded-full bg-gradient-to-b from-[#a8d4ee] via-[#2f78ad] to-[#1c4f7e] border border-[#1a3a5a] flex items-center justify-center">
    <svg width="22" height="20" viewBox="0 0 20 18">
      <path d="M1 3q4-2 8 0v6q-4-2-8 0Z" fill="#e85a30" />
      <path d="M10.500 3q4 2 8 0v6q-4 2-8 0Z" fill="#7ab830" />
      <path d="M1 10q4-2 8 0v6q-4-2-8 0Z" fill="#3a90d8" />
      <path d="M10.500 10q4 2 8 0v6q-4 2-8 0Z" fill="#f2c030" />
    </svg>
  </div>
);

const AppLogo = () => (
  <div className="absolute left-0 top-0 w-[40px] h-[41px] bg-gradient-to-br from-[#4f8f8a] via-[#1c5a58] to-[#103a3a] border border-[#0f3030] flex items-center justify-center">
    <svg width="36" height="34" viewBox="0 0 36 34" fill="none">
      <path d="M23 7C15 2 5 6 5 15c0 9 11 12 17 8 5-3 3-10-3-10-4 0-6 2-6 4" stroke="#eef8f6" strokeWidth="3" />
      <circle cx="13" cy="12" r="3" fill="#eef8f6" />
      <path d="M29 16h6l-3 4Z" fill="#0d2a2a" />
    </svg>
  </div>
);

const Watermarks = () => (
  <>
    <div className="absolute left-[546px] top-[664px]">
      <svg width="44" height="40" viewBox="0 0 44 40" fill="none">
        <path d="M6 30A18 18 0 1 1 38 14" stroke="#8a8a8a" strokeWidth="4" opacity=".7" />
        <path d="M8 32 14 12l8 14 8-14 6 20" stroke="#4a90c8" strokeWidth="5" opacity=".8" />
      </svg>
    </div>
    <div className="absolute left-[606px] top-[666px] text-[30px] leading-[36px] font-bold tracking-[3px] whitespace-nowrap text-[#6a6a6a]/50 font-['Noto_Sans_CJK_SC',sans-serif]">
      人人素材
    </div>
    <div className="absolute left-[1005px] top-[630px] w-[48px] h-[50px] border-2 border-[#777]/60 overflow-hidden">
      <svg width="48" height="50" viewBox="0 0 48 50" fill="none" stroke="#777" strokeWidth="2" opacity=".6">
        <path d="M2 22 30 8M8 30 42 12M14 38 48 20M20 44 48 30" />
      </svg>
    </div>
    <div className="absolute left-[1062px] top-[625px] text-[33px] leading-[40px] whitespace-nowrap text-[#555]/30 font-['Noto_Sans_CJK_SC',sans-serif]">
      水晶石教育
    </div>
    <div className="absolute left-[1066px] top-[666px] text-[12px] leading-[14px] tracking-[1.500px] whitespace-nowrap text-[#666]/40 font-['Liberation_Sans',sans-serif]">
      CRYSTAL EDUCATION
    </div>
  </>
);

const App = () => (
  <div className="relative w-[1280px] h-[720px] overflow-hidden flex flex-col bg-[#c8c8c8]">
    <TitleBar />
    <MenuBar />
    <Toolbar />
    <div className="flex h-[557px] shrink-0">
      <div className="w-[1096px] shrink-0">
        <Viewport />
        <TimeSlider />
      </div>
      <CommandPanel />
    </div>
    <StatusBar />
    <Taskbar />
    <MiniWindow />
    <StartOrb />
    <AppLogo />
    <Watermarks />
  </div>
);

export default App;
